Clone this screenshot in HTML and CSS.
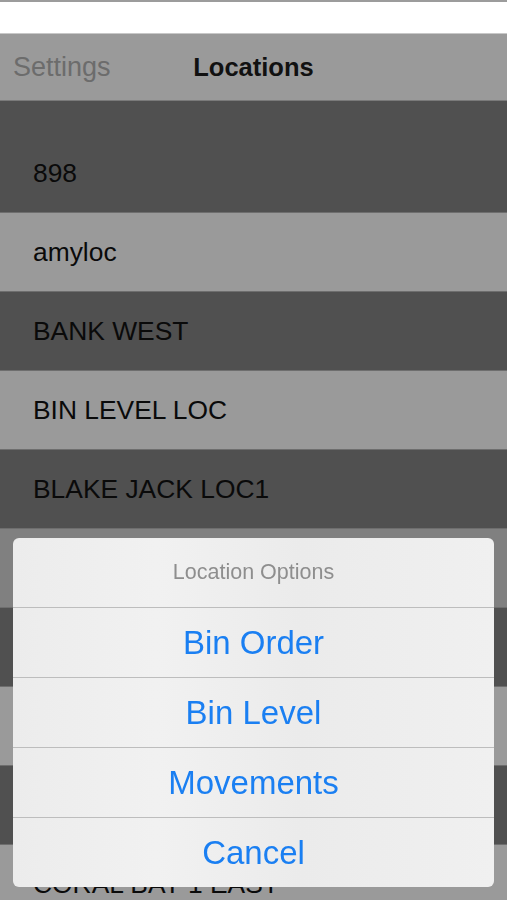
FILE: index.html
```html
<!DOCTYPE html>
<html lang="en">
<head>
  <meta charset="UTF-8">
  <meta name="viewport" content="width=device-width, initial-scale=1.0">
  <title>Locations</title>
  <link rel="stylesheet" href="styles.css">
</head>
<body>
  <div class="status"></div>
  <div class="navbar">
    <span class="back">Settings</span>
    <span class="title">Locations</span>
    <span></span>
  </div>

  <div class="section-head"></div>
  <ul class="list">
    <li class="row dark">898</li>
    <li class="row light">amyloc</li>
    <li class="row dark">BANK WEST</li>
    <li class="row light">BIN LEVEL LOC</li>
    <li class="row dark">BLAKE JACK LOC1</li>
    <li class="row selected">BOB LOC</li>
    <li class="row dark">BRANCH 2</li>
    <li class="row light">CENTRAL</li>
    <li class="row dark">CITY NORTH</li>
    <li class="row light">CORAL BAY 1 EAST</li>
  </ul>

  <div class="sheet">
    <div class="sheet-title">Location Options</div>
    <button class="sheet-btn">Bin Order</button>
    <button class="sheet-btn">Bin Level</button>
    <button class="sheet-btn">Movements</button>
    <button class="sheet-btn">Cancel</button>
  </div>
</body>
</html>
```

FILE: styles.css
```css
body {
  margin: 0;
  font-family: "Liberation Sans", Arial, sans-serif;
  background: #9a9a9a;
  height: 900px;
  overflow: hidden;
}

.status {
  height: 31px;
  background: #fff;
  border-top: 2px solid #9c9c9c;
  border-bottom: 1px solid #c8c8c8;
}

.navbar {
  height: 66px;
  display: grid;
  grid-template-columns: 1fr auto 1fr;
  align-items: center;
  background: #9a9a9a;
  border-bottom: 1px solid #7a7a7a;
}

.back {
  padding-left: 13px;
  font-size: 27px;
  color: #6c6c6c;
}

.title {
  font-size: 25.5px;
  font-weight: bold;
  color: #111;
}

.section-head {
  height: 33px;
  background: #505050;
}

.list {
  list-style: none;
  margin: 0;
  padding: 0;
}

.row {
  height: 78px;
  line-height: 78px;
  padding-left: 33px;
  font-size: 26.4px;
  color: #0a0a0a;
  border-bottom: 1px solid #6e6e6e;
  white-space: nowrap;
}

.dark {
  background: #505050;
}

.light {
  background: #9a9a9a;
}

.selected {
  background: #808080;
}

.sheet {
  position: fixed;
  left: 13px;
  right: 13px;
  top: 538px;
  display: flex;
  flex-direction: column;
  background: linear-gradient(90deg, #ececec, #f1f1f1 30%, #ebebeb 60%, #f0f0f0);
  border-radius: 6px;
  overflow: hidden;
}

.sheet-title {
  height: 69px;
  display: flex;
  align-items: center;
  justify-content: center;
  font-size: 21.5px;
  color: #8e8e8e;
}

.sheet-btn {
  height: 70px;
  border: none;
  border-top: 1px solid #bdbdbd;
  background: transparent;
  font-family: inherit;
  font-size: 33px;
  color: #1a7ff2;
  padding: 0;
}
```
